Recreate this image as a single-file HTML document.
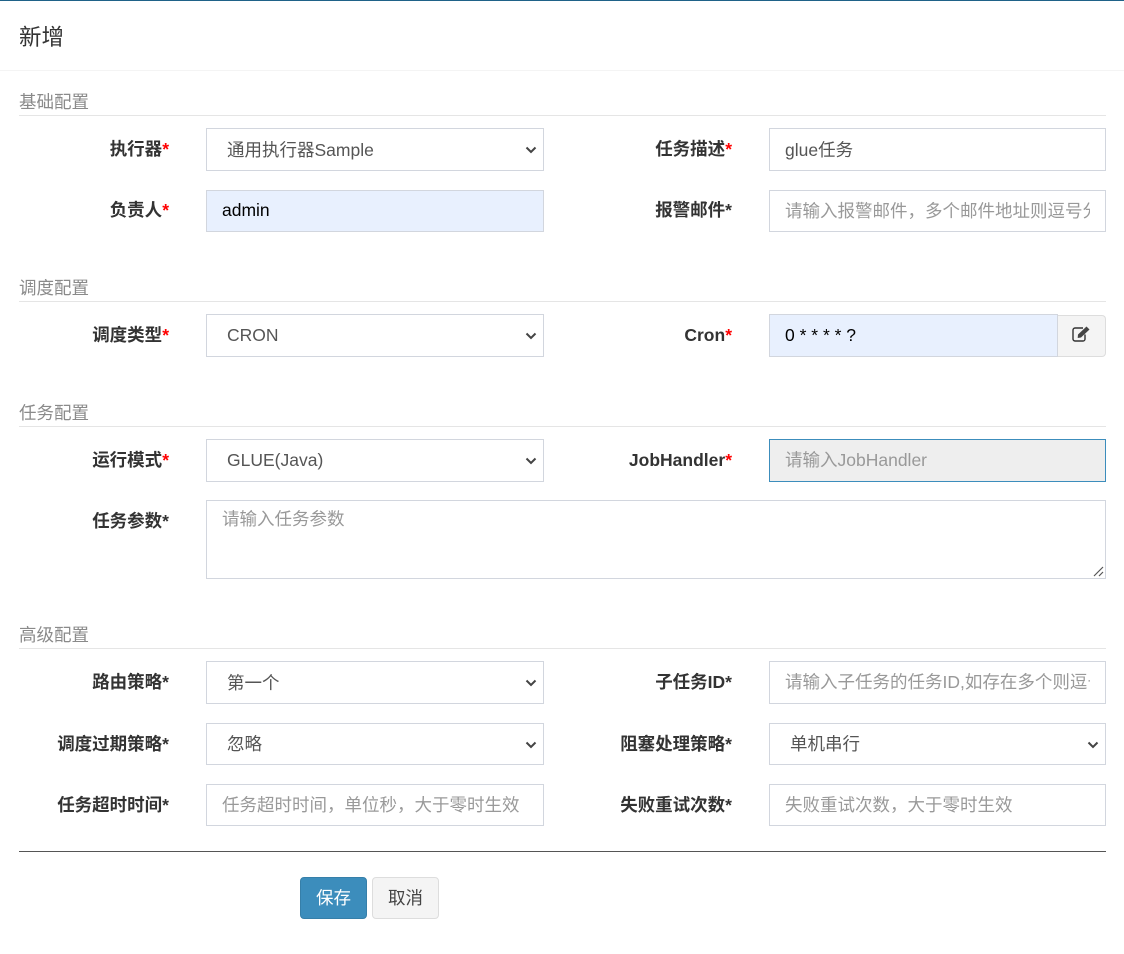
<!DOCTYPE html>
<html lang="zh"><head><meta charset="utf-8"><title>新增</title>
<style>
html,body{margin:0;padding:0;background:#fff}
body{position:relative;width:1124px;height:954px;overflow:hidden;font-family:"Liberation Sans","Noto Sans CJK SC",sans-serif;font-size:17.5px;color:#333}
.a{position:absolute;box-sizing:border-box;white-space:nowrap}
.hr{position:absolute;left:19px;width:1087px;height:1px;background:#e5e5e5}
.sec{position:absolute;left:19px;color:#8a8a8a;line-height:24px;font-size:17.5px;white-space:nowrap}
.lb{position:absolute;text-align:right;font-weight:bold;line-height:24px;color:#333;white-space:nowrap}
.l1{left:19px;width:150px}.l2{left:569px;width:163px}
.lb i{font-style:normal;color:#f00}
.f{position:absolute;box-sizing:border-box;border:1px solid #d2d6de;background:#fff;white-space:nowrap;overflow:hidden;line-height:40px;padding-left:15px;color:#555}
.c1{left:206px;width:338px}.c2{left:769px;width:337px}
.s{padding-left:20px;color:#555}
.p{color:#999}
.auto{background:#e8f0fe;color:#000}
.s svg{position:absolute;right:6px;top:17px}
.clip{display:block;width:305px;overflow:hidden}
</style></head><body>
<div class="a" style="left:0;top:0;width:1124px;height:1px;background:#1f6288"></div>
<div class="a" style="left:19px;top:22px;font-size:22.5px;line-height:32px;color:#333">新增</div>
<div class="a" style="left:0;top:70px;width:1124px;height:1px;background:#f4f4f4"></div>

<div class="sec" style="top:90px">基础配置</div><div class="hr" style="top:115px"></div>
<div class="lb l1" style="top:137px">执行器<i>*</i></div>
<div class="f c1 s" style="top:128px;height:43px;line-height:42px">通用执行器Sample<svg width="12" height="9" viewBox="0 0 12 9"><path d="M1.500 1.500l4.500 4.500 4.500-4.500" fill="none" stroke="#444" stroke-width="2"/></svg></div>
<div class="lb l2" style="top:137px">任务描述<i>*</i></div>
<div class="f c2" style="top:128px;height:43px;line-height:42px">glue任务</div>
<div class="lb l1" style="top:198px">负责人<i>*</i></div>
<div class="f c1 auto" style="top:190px;height:42px;line-height:38px">admin</div>
<div class="lb l2" style="top:198px">报警邮件*</div>
<div class="f c2 p" style="top:190px;height:42px"><span class="clip">请输入报警邮件，多个邮件地址则逗号分隔</span></div>

<div class="sec" style="top:276px">调度配置</div><div class="hr" style="top:301px"></div>
<div class="lb l1" style="top:323px">调度类型<i>*</i></div>
<div class="f c1 s" style="top:314px;height:43px">CRON<svg width="12" height="9" viewBox="0 0 12 9"><path d="M1.500 1.500l4.500 4.500 4.500-4.500" fill="none" stroke="#444" stroke-width="2"/></svg></div>
<div class="lb l2" style="top:323px">Cron<i>*</i></div>
<div class="f auto" style="left:769px;width:289px;top:314px;height:43px">0 * * * * ?</div>
<div class="a" style="left:1058px;top:315px;width:48px;height:42px;background:#f4f4f4;border:1px solid #ddd;border-left:0;border-radius:0 4px 4px 0"></div>
<svg class="a" style="left:1072px;top:325px" width="20" height="18" viewBox="0 0 20 18"><path d="M13 9.500V14a2 2 0 0 1-2 2H3a2 2 0 0 1-2-2V5a2 2 0 0 1 2-2h8" fill="none" stroke="#333" stroke-width="1.400"/><path d="M6 9.500 14.500 1.500l3 3L9 12.500l-3.300.500z" fill="#444"/></svg>

<div class="sec" style="top:401px">任务配置</div><div class="hr" style="top:426px"></div>
<div class="lb l1" style="top:448px">运行模式<i>*</i></div>
<div class="f c1 s" style="top:439px;height:43px">GLUE(Java)<svg width="12" height="9" viewBox="0 0 12 9"><path d="M1.500 1.500l4.500 4.500 4.500-4.500" fill="none" stroke="#444" stroke-width="2"/></svg></div>
<div class="lb l2" style="top:448px">JobHandler<i>*</i></div>
<div class="f c2 p" style="top:439px;height:43px;background:#eee;border-color:#3c8dbc">请输入JobHandler</div>
<div class="lb l1" style="top:509px">任务参数*</div>
<div class="f p" style="left:206px;width:900px;top:500px;height:79px">
<div style="line-height:24px;margin-top:6px">请输入任务参数</div>
<svg style="position:absolute;right:1px;bottom:1px" width="11" height="11" viewBox="0 0 11 11"><path d="M1 10 10 1M6 10l4-4" stroke="#555" stroke-width="1.200" fill="none"/></svg></div>

<div class="sec" style="top:623px">高级配置</div><div class="hr" style="top:648px"></div>
<div class="lb l1" style="top:670px">路由策略*</div>
<div class="f c1 s" style="top:661px;height:43px;line-height:42px">第一个<svg width="12" height="9" viewBox="0 0 12 9"><path d="M1.500 1.500l4.500 4.500 4.500-4.500" fill="none" stroke="#444" stroke-width="2"/></svg></div>
<div class="lb l2" style="top:670px">子任务ID*</div>
<div class="f c2 p" style="top:661px;height:43px"><span class="clip">请输入子任务的任务ID,如存在多个则逗号分隔</span></div>
<div class="lb l1" style="top:732px">调度过期策略*</div>
<div class="f c1 s" style="top:723px;height:42px">忽略<svg width="12" height="9" viewBox="0 0 12 9"><path d="M1.500 1.500l4.500 4.500 4.500-4.500" fill="none" stroke="#444" stroke-width="2"/></svg></div>
<div class="lb l2" style="top:732px">阻塞处理策略*</div>
<div class="f c2 s" style="top:723px;height:42px">单机串行<svg width="12" height="9" viewBox="0 0 12 9"><path d="M1.500 1.500l4.500 4.500 4.500-4.500" fill="none" stroke="#444" stroke-width="2"/></svg></div>
<div class="lb l1" style="top:793px">任务超时时间*</div>
<div class="f c1 p" style="top:784px;height:42px">任务超时时间，单位秒，大于零时生效</div>
<div class="lb l2" style="top:793px">失败重试次数*</div>
<div class="f c2 p" style="top:784px;height:42px">失败重试次数，大于零时生效</div>

<div class="a" style="left:19px;top:851px;width:1087px;height:1px;background:#555"></div>
<div class="a" style="left:300px;top:877px;width:67px;height:42px;background:#3c8dbc;border:1px solid #367fa9;border-radius:4px;color:#fff;text-align:center;line-height:41px">保存</div>
<div class="a" style="left:372px;top:877px;width:67px;height:42px;background:#f4f4f4;border:1px solid #ddd;border-radius:4px;color:#444;text-align:center;line-height:41px">取消</div>
</body></html>
